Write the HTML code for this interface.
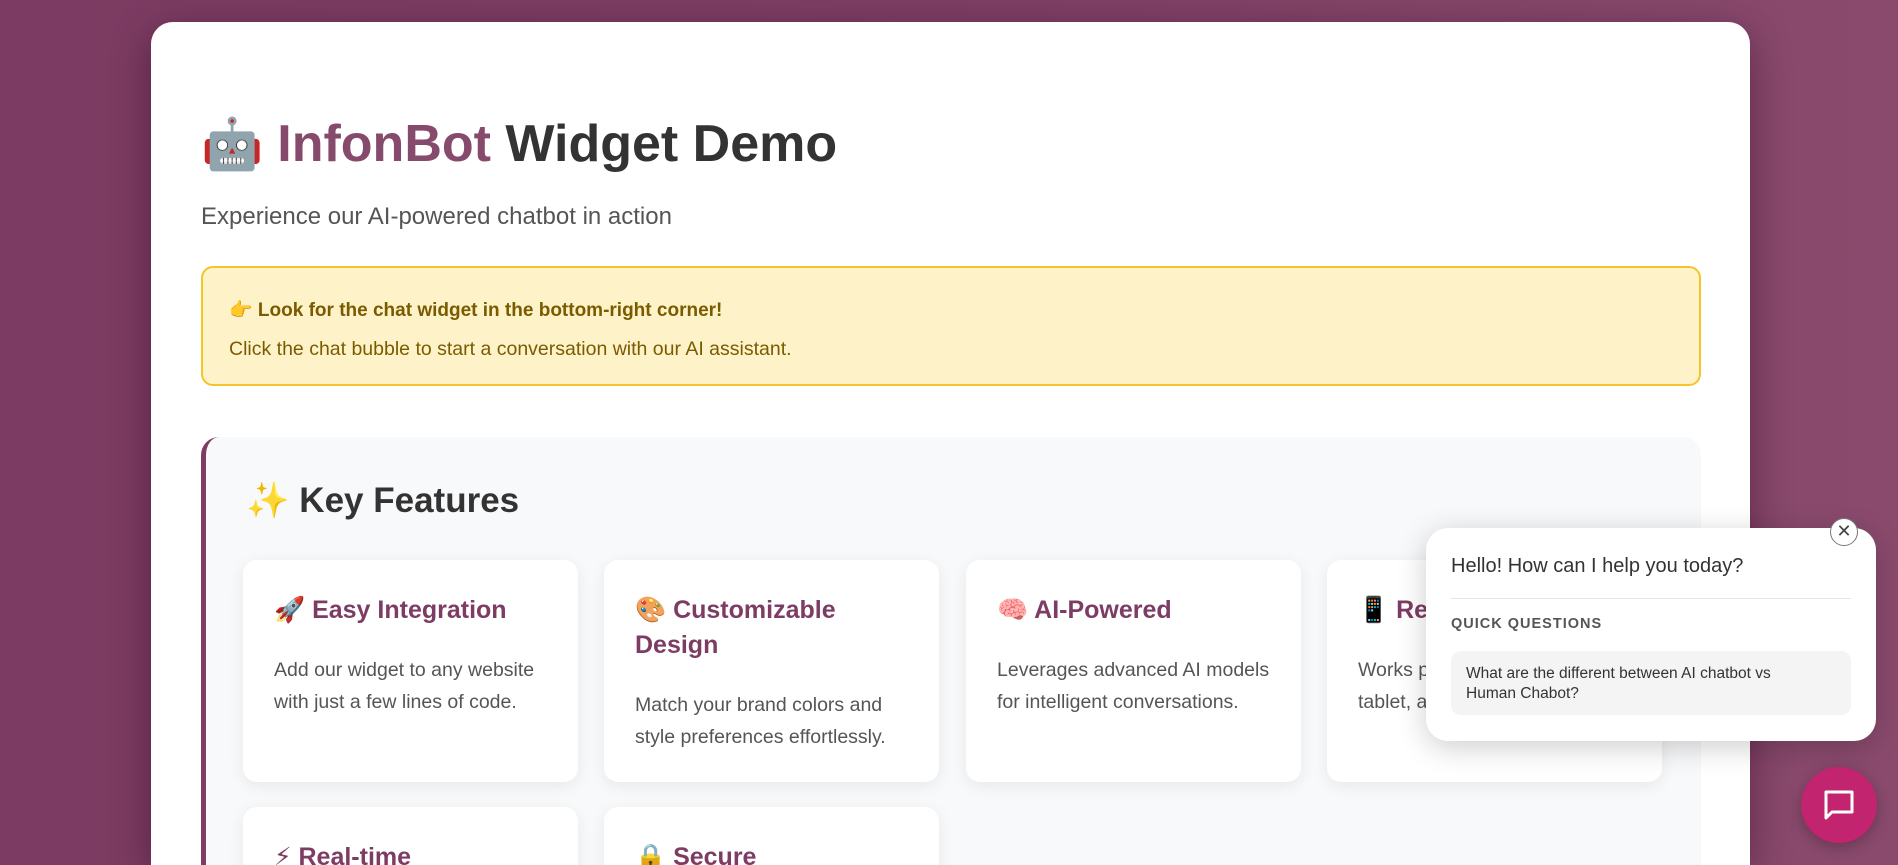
<!DOCTYPE html>
<html><head><meta charset="utf-8">
<style>
*{box-sizing:border-box;margin:0;padding:0}
html,body{width:1898px;height:865px;overflow:hidden}
body{background:linear-gradient(90deg,#7c3b62,#7e3f64 50%,#8a4a6d);font-family:"Liberation Sans","DejaVu Sans",sans-serif;position:relative}
.wrap{position:absolute;left:0;top:0;width:1898px;height:865px;overflow:hidden}
.card{position:absolute;left:151px;top:22px;width:1599px;height:843px;background:#fff;border-radius:22px 22px 0 0;box-shadow:0 10px 40px rgba(40,0,30,.45);overflow:hidden}
h1{position:absolute;left:50px;top:96px;font-size:52px;font-weight:bold;color:#333;white-space:nowrap;line-height:1}
h1 .e{font-size:50px;margin-right:14px}
h1 .b{color:#864a6c}
.sub{position:absolute;left:50px;top:181px;font-size:24px;color:#555}
.note{position:absolute;left:50px;top:244px;width:1500px;height:120px;background:#fef3c8;border:2px solid #f4c42a;border-radius:12px}
.note .t{position:absolute;left:26px;top:30px;font-size:19px;font-weight:bold;color:#7a5b00}
.note .d{position:absolute;left:26px;top:70px;font-size:19.5px;color:#7a5b00}
.feat{position:absolute;left:50px;top:415px;width:1500px;height:428px;background:#f8f9fa;border-left:5px solid #7d3c63;border-radius:18px 18px 0 0;overflow:hidden}
.feat h2{position:absolute;left:40px;top:43px;font-size:35px;font-weight:bold;color:#333}
.fc{position:absolute;width:335px;height:222px;background:#fff;border-radius:14px;box-shadow:0 4px 16px rgba(0,0,0,.07)}
.fc h3{position:absolute;left:31px;top:33px;right:20px;font-size:25px;line-height:35px;color:#7d3c63;font-weight:bold}
.fc p{position:absolute;left:31px;right:14px;font-size:19.5px;line-height:32px;color:#555}
.pop{position:absolute;left:1426px;top:528px;width:450px;height:213px;background:#fff;border-radius:22px;box-shadow:0 6px 30px rgba(0,0,0,.2)}
.pop .h{position:absolute;left:25px;top:27px;font-size:20px;color:#333}
.pop .ln{position:absolute;left:25px;right:25px;top:70px;border-top:1px solid #e6e6e6}
.pop .q{position:absolute;left:25px;top:88px;font-size:14.5px;font-weight:bold;letter-spacing:1px;color:#555}
.pop .qb{position:absolute;left:25px;right:25px;top:123px;height:64px;background:#f4f4f4;border-radius:10px;padding:13px 60px 13px 15px;font-size:15.5px;line-height:20px;color:#333}
.x{position:absolute;left:1830px;top:518px;width:28px;height:28px;border-radius:50%;background:#fff;border:1.5px solid #777;text-align:center;line-height:25px;font-size:18px;color:#444;font-weight:bold}
.fab{position:absolute;left:1801px;top:767px;width:76px;height:76px;border-radius:50%;background:#c2246f;box-shadow:0 4px 14px rgba(0,0,0,.25)}
</style></head><body><div class="wrap">
<div class="card">
<h1><span class="e">🤖</span><span class="b">InfonBot</span> Widget Demo</h1>
<div class="sub">Experience our AI-powered chatbot in action</div>
<div class="note"><div class="t">👉 Look for the chat widget in the bottom-right corner!</div><div class="d">Click the chat bubble to start a conversation with our AI assistant.</div></div>
<div class="feat">
<h2>✨ Key Features</h2>
<div class="fc" style="left:37px;top:123px"><h3>🚀 Easy Integration</h3><p style="top:94px">Add our widget to any website with just a few lines of code.</p></div>
<div class="fc" style="left:398px;top:123px"><h3>🎨 Customizable Design</h3><p style="top:129px">Match your brand colors and style preferences effortlessly.</p></div>
<div class="fc" style="left:760px;top:123px"><h3>🧠 AI-Powered</h3><p style="top:94px">Leverages advanced AI models for intelligent conversations.</p></div>
<div class="fc" style="left:1121px;top:123px"><h3>📱 Responsive</h3><p style="top:94px">Works perfectly on desktop, tablet, and mobile devices.</p></div>
<div class="fc" style="left:37px;top:370px"><h3>⚡ Real-time</h3></div>
<div class="fc" style="left:398px;top:370px"><h3>🔒 Secure</h3></div>
</div>
</div>
<div class="pop"><div class="h">Hello! How can I help you today?</div><div class="ln"></div><div class="q">QUICK QUESTIONS</div><div class="qb">What are the different between AI chatbot vs Human Chabot?</div></div>
<div class="x">✕</div>
<div class="fab"><svg width="76" height="76" viewBox="0 0 76 76"><path d="M25 25h26v20H31l-6 6z" fill="none" stroke="#fff" stroke-width="3" stroke-linejoin="round"/></svg></div>
</div></body></html>
